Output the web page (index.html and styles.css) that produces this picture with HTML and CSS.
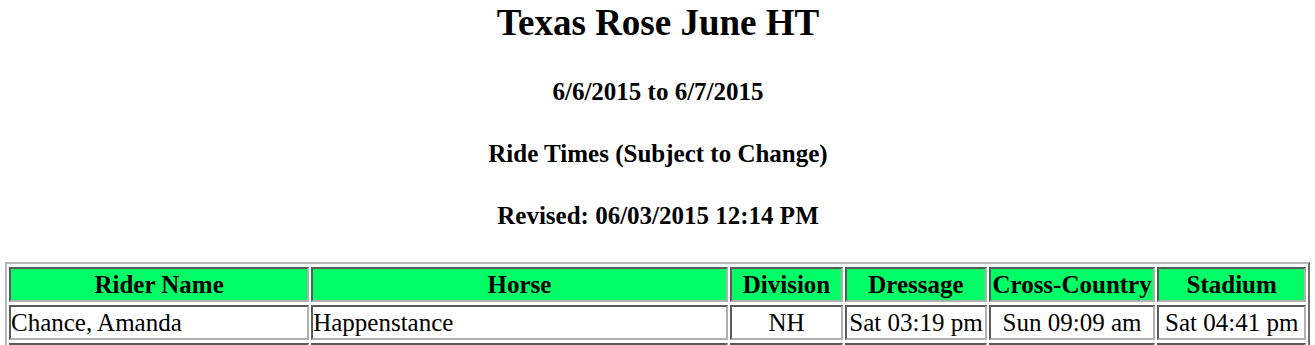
FILE: index.html
```html
<!DOCTYPE html>
<html lang="en">
<head>
  <meta charset="UTF-8">
  <title>Texas Rose June HT - Ride Times</title>
  <link rel="stylesheet" href="styles.css">
</head>
<body>

  <h2 class="title">Texas Rose June HT</h2>
  <h4 class="sub">6/6/2015 to 6/7/2015</h4>
  <h4 class="sub">Ride Times (Subject to Change)</h4>
  <h4 class="sub">Revised: 06/03/2015 12:14 PM</h4>

  <table class="times">
    <colgroup>
      <col class="c-rider">
      <col class="c-horse">
      <col class="c-div">
      <col class="c-dr">
      <col class="c-xc">
      <col class="c-sj">
    </colgroup>
    <tr>
      <th>Rider Name</th>
      <th>Horse</th>
      <th>Division</th>
      <th>Dressage</th>
      <th>Cross-Country</th>
      <th>Stadium</th>
    </tr>
    <tr>
      <td>Chance, Amanda</td>
      <td>Happenstance</td>
      <td class="center">NH</td>
      <td class="center">Sat 03:19 pm</td>
      <td class="center">Sun 09:09 am</td>
      <td class="center">Sat 04:41 pm</td>
    </tr>
    <tr>
      <td>&nbsp;</td>
      <td>&nbsp;</td>
      <td>&nbsp;</td>
      <td>&nbsp;</td>
      <td>&nbsp;</td>
      <td>&nbsp;</td>
    </tr>
  </table>

</body>
</html>
```

FILE: styles.css
```css
body {
  font-family: "Liberation Serif", "Times New Roman", serif;
  font-size: 25px;
  color: #000;
  background: #fff;
  margin: 0 4px 0 5px;
}

.title {
  font-size: 37px;
  text-align: center;
  margin: 2px 0 0;
  line-height: 42px;
}

.sub {
  font-size: 25px;
  text-align: center;
  margin: 0;
  line-height: 29px;
  margin-top: 33px;
}

.times {
  width: 1305px;
  table-layout: fixed;
  margin-top: 32px;
  border: 2px solid;
  border-color: #b8b8b8 #707070 #707070 #b8b8b8;
  border-spacing: 2px 3px;
}

.times th,
.times td {
  border: 2px solid;
  border-color: #5a5a5a #b0b0b0 #b0b0b0 #5a5a5a;
  padding: 1px 0;
  line-height: 29px;
  white-space: nowrap;
  overflow: hidden;
}

.times th {
  background-color: #00ff66;
  font-weight: bold;
  text-align: center;
}

.center {
  text-align: center;
}

.c-rider { width: 299px; }
.c-horse { width: 415px; }
.c-div { width: 113px; }
.c-dr { width: 141px; }
.c-xc { width: 166px; }
.c-sj { width: 148px; }
```
